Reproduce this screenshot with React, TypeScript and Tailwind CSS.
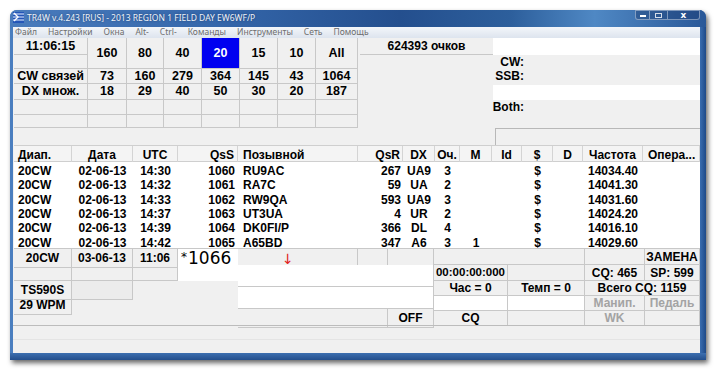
import React from 'react';

const sans = "font-['Liberation_Sans',Arial,sans-serif]";

const bands = ['160', '80', '40', '20', '15', '10', 'All'];
const cwCounts = ['73', '160', '279', '364', '145', '43', '1064'];
const dxCounts = ['18', '29', '40', '50', '30', '20', '187'];

const menuItems = ['Файл', 'Настройки', 'Окна', 'Alt-', 'Ctrl-', 'Команды', 'Инструменты', 'Сеть', 'Помощь'];

const headers = ['Диап.', 'Дата', 'UTC', 'QsS', 'Позывной', 'QsR', 'DX', 'Оч.', 'M', 'Id', '$', 'D', 'Частота', 'Опера...'];

const columnAlign = [
  'justify-start pl-[4px]',
  'justify-center',
  'justify-center',
  'justify-end pr-[3px]',
  'justify-start pl-[5px]',
  'justify-end pr-[2px]',
  'justify-center',
  'justify-center',
  'justify-center',
  'justify-center',
  'justify-center',
  'justify-center',
  'justify-center',
  'justify-start pl-[5px]',
];

const qsos = [
  ['20CW', '02-06-13', '14:30', '1060', 'RU9AC', '267', 'UA9', '3', '', '', '$', '', '14034.40', ''],
  ['20CW', '02-06-13', '14:32', '1061', 'RA7C', '59', 'UA', '2', '', '', '$', '', '14041.30', ''],
  ['20CW', '02-06-13', '14:33', '1062', 'RW9QA', '593', 'UA9', '3', '', '', '$', '', '14031.60', ''],
  ['20CW', '02-06-13', '14:37', '1063', 'UT3UA', '4', 'UR', '2', '', '', '$', '', '14024.20', ''],
  ['20CW', '02-06-13', '14:39', '1064', 'DK0FI/P', '366', 'DL', '4', '', '', '$', '', '14016.10', ''],
  ['20CW', '02-06-13', '14:42', '1065', 'A65BD', '347', 'A6', '3', '1', '', '$', '', '14029.60', ''],
];

const Cell = ({ children, className = '' }: { children?: React.ReactNode; className?: string }) => (
  <div className={`flex items-center justify-center border-r border-b border-[#c8c8c8] ${className}`}>
    {children}
  </div>
);

const AppIcon = () => (
  <svg width="11" height="11" viewBox="0 0 11 11">
    <rect x="0" y="0" width="11" height="11" fill="#2456b8" />
    <path d="M0 2h11M0 5h11M0 8h11" stroke="#e8f0ff" strokeWidth="1.2" />
    <path d="M1 1l4 4-4 4" stroke="#ffffff" strokeWidth="1.4" fill="none" />
  </svg>
);

const TitleBar = () => (
  <div className="h-[17px] flex items-start rounded-t-[7px] bg-[linear-gradient(90deg,#4a7cbd_0%,#3466aa_30%,#244f8e_56%,#2d5f9c_72%,#4f88c4_84%,#2a5898_100%)]">
    <div className="ml-[3px] mt-[2px]">
      <AppIcon />
    </div>
    <div className="ml-[3px] mt-[2px] text-[8.5px] leading-[11px] text-[#eef3fa] font-['Noto_Sans',sans-serif] [text-shadow:0_0_2px_rgba(10,30,70,0.6)] whitespace-nowrap">
      TR4W v.4.243 [RUS] - 2013 REGION 1 FIELD DAY EW6WF/P
    </div>
    <div className="ml-auto mr-[6px] flex h-[10px]">
      <div className="w-[15px] border border-[rgba(255,255,255,0.4)] rounded-bl-[3px] bg-[rgba(20,50,100,0.35)] flex items-end justify-center pb-[2px]">
        <div className="w-[6px] h-[2px] bg-white" />
      </div>
      <div className="w-[18px] border-y border-r border-[rgba(255,255,255,0.4)] bg-[rgba(20,50,100,0.35)] flex items-center justify-center">
        <div className="w-[7px] h-[5px] border border-[rgba(255,255,255,0.8)]" />
      </div>
      <div className="w-[32px] border-y border-r border-[rgba(255,255,255,0.4)] rounded-br-[3px] bg-[rgba(20,50,100,0.35)] flex items-center justify-center text-white text-[9px] leading-none font-bold font-['DejaVu_Sans',sans-serif]">
        x
      </div>
    </div>
  </div>
);

const MenuBar = () => (
  <div className="h-[11px] flex items-center gap-[11px] pl-[2px] bg-[linear-gradient(180deg,#f3f6fa,#dde4ee)] text-[8.5px] leading-none text-[#6e6e6e] font-['Noto_Sans',sans-serif]">
    {menuItems.map((item) => (
      <span key={item}>{item}</span>
    ))}
  </div>
);

const BandGrid = () => (
  <div className="grid grid-cols-[74px_39px_37px_38px_38px_38px_38px_42px] grid-rows-[17px_14px_15px_16px_15px_13px] text-[12.5px] font-bold text-black">
    <Cell>11:06:15</Cell>
    {bands.map((band) => (
      <Cell key={band} className={band === '20' ? 'row-span-2 bg-[#0000f0] text-white' : 'row-span-2'}>
        {band}
      </Cell>
    ))}
    <Cell />
    <Cell>CW связей</Cell>
    {cwCounts.map((n, i) => (
      <Cell key={`cw-${i}`}>{n}</Cell>
    ))}
    <Cell>DX множ.</Cell>
    {dxCounts.map((n, i) => (
      <Cell key={`dx-${i}`}>{n}</Cell>
    ))}
    {Array.from({ length: 16 }).map((_, i) => (
      <Cell key={`empty-${i}`} />
    ))}
  </div>
);

const ScorePanel = () => (
  <div className="w-[135px] flex flex-col pl-[2px]">
    <div className="h-[17px] flex items-center justify-center border-b border-[#c8c8c8] text-[12px] font-bold">
      624393 очков
    </div>
  </div>
);

const RatePanel = () => (
  <div className="w-[207px] flex flex-col text-[12px] font-bold">
    <div className="h-[17px] bg-white" />
    <div className="h-[30px] flex flex-col">
      <div className="h-[14px] w-[31px] flex items-center justify-end">CW:</div>
      <div className="h-[14px] w-[31px] flex items-center justify-end">SSB:</div>
    </div>
    <div className="h-[15px] bg-white" />
    <div className="h-[28px]">
      <div className="h-[14px] w-[31px] flex items-center justify-end">Both:</div>
    </div>
    <div className="h-[17px] ml-[2px] border-t border-l border-[#b8b8b8]" />
  </div>
);

const LogTable = () => (
  <div className="flex flex-col">
    <div className="h-[17px] grid grid-cols-[58px_61px_45px_60px_120px_45px_32px_25px_32px_30px_31px_30px_60px_57px] bg-[#f4f4f4] border-y border-[#cfcfcf] text-[12px] font-bold">
      {headers.map((h, i) => (
        <div key={h} className={`flex items-center border-r border-[#d4d4d4] ${columnAlign[i]}`}>
          {h}
        </div>
      ))}
    </div>
    <div className="h-[86px] bg-white flex flex-col text-[12px] font-bold">
      {qsos.map((row, r) => (
        <div
          key={r}
          className="h-[14.33px] grid grid-cols-[58px_61px_45px_60px_120px_45px_32px_25px_32px_30px_31px_30px_60px_57px]"
        >
          {row.map((value, i) => (
            <div key={i} className={`flex items-center ${columnAlign[i]}`}>
              {value}
            </div>
          ))}
        </div>
      ))}
    </div>
  </div>
);

const EntryArea = () => (
  <div className="h-[77px] flex border-t border-[#c8c8c8] text-[12px] font-bold">
    {/* left: band / date / time / radio */}
    <div className="w-[164px] flex flex-col">
      <div className="h-[16px] grid grid-cols-[58px_61px_45px]">
        <Cell>20CW</Cell>
        <Cell>03-06-13</Cell>
        <Cell>11:06</Cell>
      </div>
      <div className="h-[16px] grid grid-cols-[58px_61px_45px]">
        <Cell />
        <Cell />
        <Cell />
      </div>
      <div className="h-[15px] grid grid-cols-[58px_61px]">
        <Cell>TS590S</Cell>
        <Cell className="bg-[#ececec]" />
      </div>
      <div className="h-[15px] grid grid-cols-[58px]">
        <Cell>29 WPM</Cell>
      </div>
    </div>

    {/* qso number */}
    <div className="w-[60px]">
      <div className="h-[32px] bg-white pl-[3px] pt-[1px] flex items-start font-normal text-black font-['DejaVu_Sans',sans-serif]">
        <span className="text-[12px] leading-[12px] mt-[1px] mr-[1px]">*</span>
        <span className="text-[17px] leading-[17px]">1066</span>
      </div>
    </div>

    {/* call / exchange windows */}
    <div className="w-[196px] flex flex-col">
      <div className="h-[16px] grid grid-cols-[120px_30px_46px]">
        <Cell className="justify-start! pl-[44px] text-[#e02020] text-[14px] font-normal font-['DejaVu_Sans',sans-serif]">↓</Cell>
        <Cell />
        <Cell />
      </div>
      <div className="h-[23px] bg-white border-b border-r border-[#c8c8c8]" />
      <div className="h-[22px] bg-white border-b border-r border-[#c8c8c8]" />
      <div className="h-[16px] grid grid-cols-[150px_46px]">
        <Cell />
        <Cell>OFF</Cell>
      </div>
    </div>

    {/* timers and counters */}
    <div className="w-[266px] grid grid-cols-[74px_77px_60px_55px] grid-rows-[16px_16px_15px_15px_15px]">
      <Cell className="col-span-2" />
      <Cell />
      <Cell>ЗАМЕНА</Cell>

      <Cell className="text-[11.5px]">00:00:00:000</Cell>
      <Cell />
      <Cell>CQ: 465</Cell>
      <Cell>SP: 599</Cell>

      <Cell>Час = 0</Cell>
      <Cell>Темп = 0</Cell>
      <Cell className="col-span-2">Всего CQ: 1159</Cell>

      <Cell className="bg-white" />
      <Cell className="bg-white" />
      <Cell className="text-[#a3a3a3]">Манип.</Cell>
      <Cell className="text-[#a3a3a3]">Педаль</Cell>

      <Cell>CQ</Cell>
      <Cell />
      <Cell className="text-[#a3a3a3]">WK</Cell>
      <Cell />
    </div>
  </div>
);

const StatusBar = () => (
  <div className="h-[28px] flex flex-col">
    <div className="h-[15px] border-t border-[#bcbcbc] border-b border-b-[#e4e4e4]" />
  </div>
);

const App = () => {
  return (
    <div className={`w-[720px] h-[372px] bg-white overflow-hidden pt-[10px] pl-[10px] ${sans}`}>
      <div className="w-[696px] h-[350px] flex flex-col rounded-t-[7px] bg-[#3565a5] shadow-[2px_3px_5px_rgba(0,0,0,0.6)]">
        <TitleBar />
        <div className="h-[326px] flex">
          <div className="w-[3px] bg-[#4a7ebf]" />
          <div className="w-[687px] flex flex-col bg-[#f0f0f0] text-black">
            <MenuBar />
            <div className="h-[107px] flex pl-[1px]">
              <div className="w-[344px]">
                <BandGrid />
              </div>
              <ScorePanel />
              <RatePanel />
            </div>
            <div className="pl-[1px]">
              <LogTable />
            </div>
            <div className="pl-[1px]">
              <EntryArea />
            </div>
            <StatusBar />
          </div>
          <div className="w-[6px] bg-[linear-gradient(90deg,#3a6db0,#1f4a88)]" />
        </div>
        <div className="h-[7px] bg-[linear-gradient(180deg,#3d6fb0,#244f8c)]" />
      </div>
    </div>
  );
};

export default App;
